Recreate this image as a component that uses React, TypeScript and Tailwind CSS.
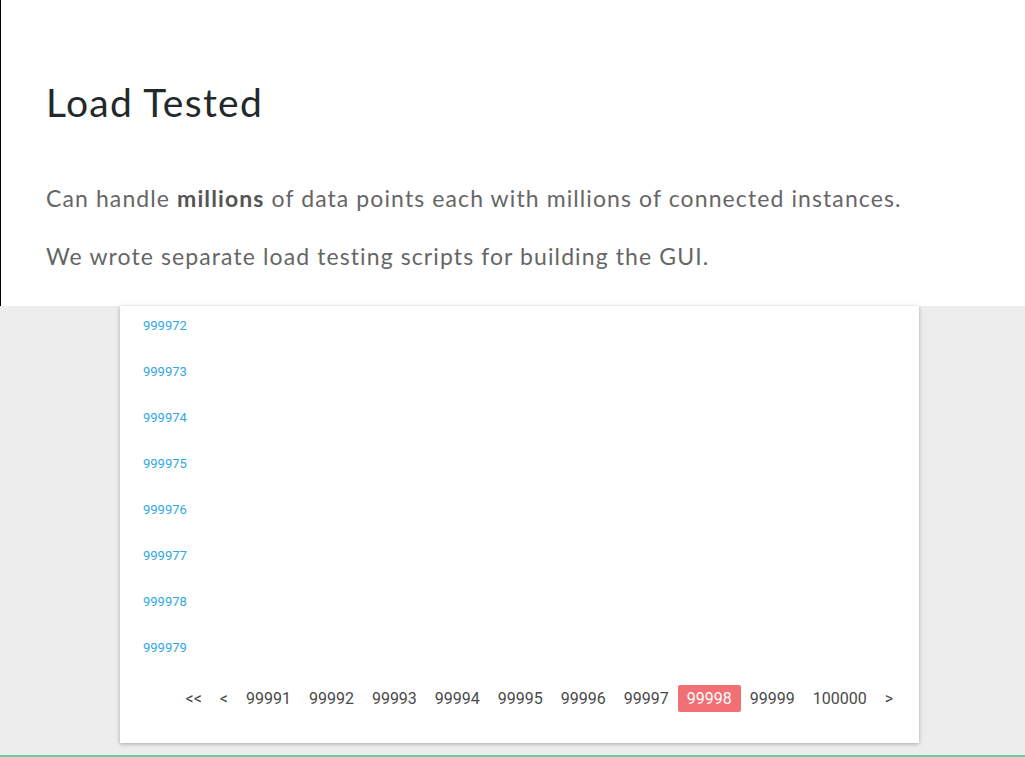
const rows = [999972, 999973, 999974, 999975, 999976, 999977, 999978, 999979];
const pages = ["<<", "<", "99991", "99992", "99993", "99994", "99995", "99996", "99997", "99998", "99999", "100000", ">"];

export default function App() {
  return (
    <div className="flex h-[757px] w-[1025px] flex-col overflow-hidden bg-white font-['Lato',sans-serif]">
      <section className="h-[306px] shrink-0 border-l border-black pl-[45px] pt-[78px]">
        <h1 className="text-[39px] leading-[48px] font-normal tracking-[1.3px] text-[#23292b]">Load Tested</h1>
        <p className="mt-[58px] text-[23px] leading-[28px] tracking-[1.1px] text-[#666]">
          Can handle <b className="font-bold text-[#555]">millions</b> of data points each with millions of connected instances.
        </p>
        <p className="mt-[30px] text-[23px] leading-[28px] tracking-[1.1px] text-[#666]">
          We wrote separate load testing scripts for building the GUI.
        </p>
      </section>
      <section className="flex-1 border-b-2 border-[#5fd3a0] bg-[#ededed] pl-[120px] pr-[106px]">
        <div className="bg-white pt-[12px] pb-[31px] shadow-[0_1px_4px_rgba(0,0,0,0.3)] font-['Roboto',sans-serif]">
          <ul className="flex flex-col gap-[31px] pl-[23px]">
            {rows.map((r) => (
              <li key={r} className="text-[13px] leading-[15px] text-[#2fa8e6]">
                {r}
              </li>
            ))}
          </ul>
          <div className="mt-[30px] flex justify-end pr-[17px]">
            {pages.map((p) => (
              <span
                key={p}
                className={
                  p === "99998"
                    ? "h-[27px] rounded-[2px] bg-[#f07075] px-[9px] text-[16px] leading-[27px] text-white"
                    : "h-[27px] px-[9px] text-[16px] leading-[27px] text-[#4a4a4a]"
                }
              >
                {p}
              </span>
            ))}
          </div>
        </div>
      </section>
    </div>
  );
}
